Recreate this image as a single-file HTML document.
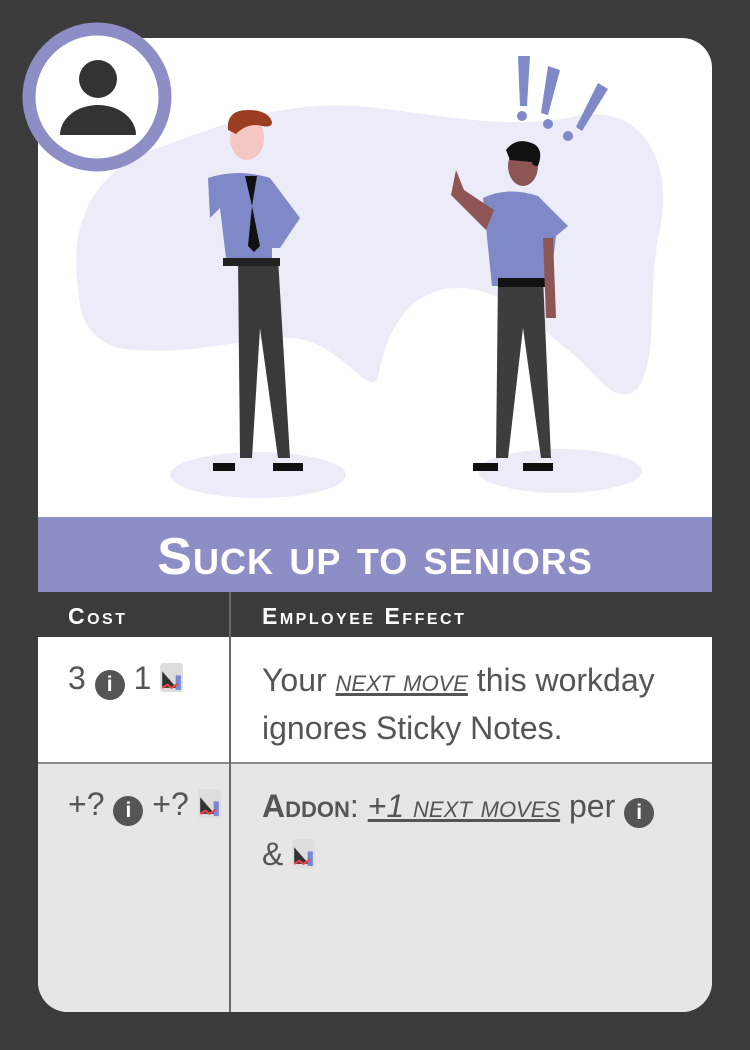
<!DOCTYPE html>
<html><head><meta charset="utf-8"><style>
body{margin:0;width:750px;height:1050px;background:#3b3b3b;position:relative;overflow:hidden;font-family:"Liberation Sans",sans-serif}
.card{position:absolute;left:38px;top:38px;width:674px;height:974px;border-radius:30px;overflow:hidden;background:#fff}
.title{position:absolute;left:0;top:479px;width:674px;height:75px;background:#8e8ec6;color:#fff;text-align:center;font-weight:bold;font-size:52px;line-height:80px;font-variant:small-caps;letter-spacing:1px}
.hdr{position:absolute;left:0;top:554px;width:674px;height:45px;background:#3b3b3b;color:#fff;font-weight:bold;font-size:23px;font-variant:small-caps;letter-spacing:2.5px;line-height:48px}
.r1{position:absolute;left:0;top:599px;width:674px;height:125px;background:#fff}
.r2{position:absolute;left:0;top:724px;width:674px;height:250px;background:#e6e6e6;border-top:2px solid #8a8a8a}
.vl{position:absolute;left:191px;top:554px;width:2px;height:420px;background:#6a6a6a}
.t{position:absolute;color:#555;font-size:32px;white-space:nowrap}
.i{display:inline-block;width:30px;height:30px;border-radius:50%;background:#555;color:#fff;font-size:21px;font-weight:bold;text-align:center;line-height:30px;vertical-align:-2px}
.ch{display:inline-block;width:23px;height:29px;vertical-align:-3px}
u{font-variant:small-caps;font-style:italic}
</style></head><body>
<div class="card">
<svg width="674" height="479" style="position:absolute;left:0;top:0">
<path d="M40 250 C30 180 60 130 120 110 C200 80 260 60 340 70 C420 80 470 90 530 80 C600 60 640 120 620 200 C610 260 620 320 600 350 C580 370 560 340 540 320 C500 290 470 250 420 250 C380 250 350 280 340 340 C330 360 300 300 250 300 C200 300 150 320 80 310 C50 300 42 280 40 250Z" fill="#ececf8"/>
<circle cx="308" cy="95" r="16" fill="#ececf8"/><circle cx="88" cy="165" r="18" fill="#ececf8"/>
<ellipse cx="220" cy="437" rx="88" ry="23" fill="#ececf8"/><ellipse cx="522" cy="433" rx="82" ry="22" fill="#ececf8"/>
<g fill="#8089c8"><path d="M480 18h12l-3 50h-7z"/><circle cx="484" cy="78" r="5"/><path d="M510 28l12 4-12 45-7-2z"/><circle cx="510" cy="86" r="5"/><path d="M560 45l10 6-26 42-6-4z"/><circle cx="530" cy="98" r="5"/></g>
<path d="M200 220h40l12 200h-12l-18-130-8 130h-12z" fill="#3a3a3a"/>
<path d="M170 140q30-10 62 0l30 40-20 30h-8v10h-46l-6-50-10 10z" fill="#8089c8"/>
<rect x="185" y="220" width="57" height="8" fill="#222"/>
<path d="M207 138l12 0 -5 30 8 40-6 6-6-6 4-40z" fill="#111"/>
<ellipse cx="209" cy="100" rx="17" ry="22" fill="#f4c6c4"/><path d="M190 92q-2-20 20-20 20 0 24 12 0 6-10 4q-14-4-26 8z" fill="#9b3d20"/>
<path d="M175 425h22v8h-22z M235 425h30v8h-30z" fill="#111"/>
<path d="M460 240h45l8 180h-10l-18-130-15 130h-12z" fill="#3d3d3d"/>
<path d="M445 160q25-12 55-2l30 30-12 10-6 50h-58z" fill="#8089c8"/>
<rect x="460" y="240" width="48" height="9" fill="#111"/>
<path d="M418 132l8 20 30 20-8 20-35-35z M505 200h10l3 80h-10z" fill="#8e5555"/>
<ellipse cx="485" cy="128" rx="15" ry="20" fill="#8e5555"/><path d="M468 112q10-14 28-6 10 6 4 22-6 0-6-4l-22-2z" fill="#111"/>
<path d="M435 425h25v8h-25z M485 425h30v8h-30z" fill="#111"/>
</svg>
<div class="title">Suck up to seniors</div>
<div class="hdr"><span style="position:absolute;left:30px">Cost</span><span style="position:absolute;left:224px">Employee Effect</span></div>
<div class="r1"></div><div class="r2"></div><div class="vl"></div>
<div class="t" style="left:30px;top:622px">3 <span class="i">i</span> 1 <svg class="ch" viewBox="0 0 22 28"><rect width="22" height="28" rx="3" fill="#ddd"/><path d="M2 8l14 16H2z" fill="#333"/><rect x="15" y="12" width="5" height="14" fill="#7a86d8"/><path d="M2 24l5-3 4 3 6-4" stroke="#e44" stroke-width="2" fill="none"/></svg></div>
<div class="t" style="left:224px;top:618px;line-height:48px">Your <u>next move</u> this workday<br>ignores Sticky Notes.</div>
<div class="t" style="left:30px;top:748px">+? <span class="i">i</span> +? <svg class="ch" viewBox="0 0 22 28"><rect width="22" height="28" rx="3" fill="#ddd"/><path d="M2 8l14 16H2z" fill="#333"/><rect x="15" y="12" width="5" height="14" fill="#7a86d8"/><path d="M2 24l5-3 4 3 6-4" stroke="#e44" stroke-width="2" fill="none"/></svg></div>
<div class="t" style="left:224px;top:744px;line-height:48px"><b style="font-variant:small-caps">Addon</b>: <u>+1 next moves</u> per <span class="i">i</span><br>&amp; <svg class="ch" viewBox="0 0 22 28"><rect width="22" height="28" rx="3" fill="#ddd"/><path d="M2 8l14 16H2z" fill="#333"/><rect x="15" y="12" width="5" height="14" fill="#7a86d8"/><path d="M2 24l5-3 4 3 6-4" stroke="#e44" stroke-width="2" fill="none"/></svg></div>
</div>
<svg width="160" height="160" style="position:absolute;left:22px;top:22px">
<circle cx="75" cy="75" r="68" fill="#fff" stroke="#8e8ec6" stroke-width="13"/>
<circle cx="76" cy="57" r="19" fill="#333"/><path d="M38 113a38 30 0 0 1 76 0z" fill="#333"/>
</svg>
</body></html>
